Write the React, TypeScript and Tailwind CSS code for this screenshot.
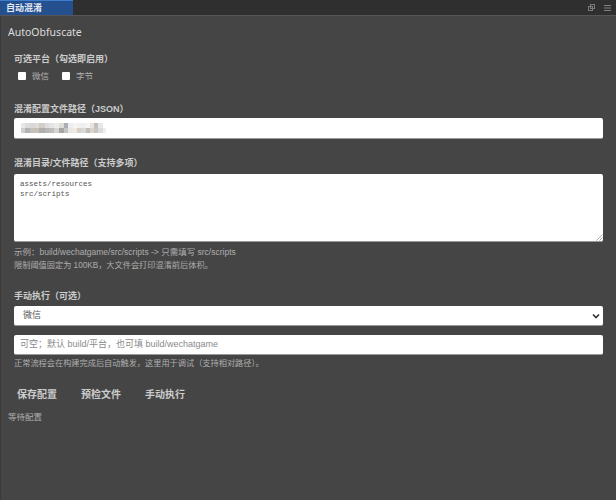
const font = "font-['Liberation_Sans','Noto_Sans_CJK_SC',sans-serif]";

function Label({ children, className = "" }: { children: React.ReactNode; className?: string }) {
  return <div className={`h-[14px] text-[9px] leading-[14px] font-bold text-[#cccccc] ${className}`}>{children}</div>;
}

const top = [
  [4, "#e8e8e8"], [5, "#dcdcdc"], [5, "#d8d8d8"], [4, "#e2dcd6"], [6, "#d2cdc8"], [4, "#dddddd"], [5, "#e4e4e4"], [5, "#ececec"], [5, "#e0dcd8"], [4, "#a8adb8"], [5, "#ededed"], [4, "#f4f4f4"], [4, "#f2f0ee"], [5, "#f0f0f0"], [4, "#f5f5f5"], [4, "#e8e4e0"], [4, "#c4bfba"], [5, "#e8e8e8"], [3, "#ffffff"],
] as const;
const bottom = [
  [4, "#d0d0d0"], [5, "#b0b4b8"], [5, "#c4c0bc"], [4, "#c8c0b4"], [6, "#b0aeac"], [4, "#b8b8b8"], [5, "#c0bebc"], [5, "#d4d4d4"], [5, "#a8a4a0"], [4, "#c4c4c4"], [5, "#e8e8e8"], [4, "#f0e8dc"], [4, "#d8d0c8"], [5, "#d8d8d8"], [4, "#c0bcb8"], [4, "#dcd4cc"], [4, "#c8c4c0"], [5, "#d8dce0"], [3, "#eeeeee"],
] as const;

export default function App() {
  return (
    <div className={`w-[616px] h-[500px] overflow-hidden bg-[#454545] flex flex-col ${font}`}>
      <div className="h-4 shrink-0 flex items-stretch justify-between bg-[#2f2f2f] border-b border-[#565656]">
        <div className="w-[73px] bg-[#25508f] border-t border-[#3f7ccb] text-[9px] leading-[15px] text-[#e4e9f2] pl-[6px] font-bold">自动混淆</div>
        <div className="flex items-center gap-[9px] pr-[5px]">
          <svg width="7" height="7" viewBox="0 0 7 7" fill="none" stroke="#7a7a7a" strokeWidth="1">
            <rect x="2.5" y="0.5" width="4" height="4" />
            <rect x="0.5" y="2.5" width="4" height="4" />
          </svg>
          <svg width="7" height="6" viewBox="0 0 7 6" fill="none" stroke="#808080" strokeWidth="1">
            <path d="M0 0.5H7M0 3H7M0 5.5H7" />
          </svg>
        </div>
      </div>
      <div className="flex-1 border-l border-[#3a3a3a] pl-[7px] pt-[9px]">
        <div className="h-[15px] text-[10.5px] leading-[15px] text-[#dcdcdc] font-['Noto_Sans',sans-serif]">AutoObfuscate</div>
        <div className="pl-[6px] pr-[13px] w-[608px] pt-[12px]">
          <Label>可选平台（勾选即启用）</Label>
          <div className="flex items-center h-[13px] mt-[4px] pl-[4px] text-[8.5px] text-[#aeaeae]">
            <span className="w-[8px] h-[8px] mb-[2px] bg-white rounded-[1px]" />
            <span className="ml-[6px]">微信</span>
            <span className="w-[8px] h-[8px] mb-[2px] ml-[13px] bg-white rounded-[1px]" />
            <span className="ml-[6px]">字节</span>
          </div>

          <Label className="mt-[19px]">混淆配置文件路径（JSON）</Label>
          <div className="mt-[2px] h-[21px] bg-white rounded-[2px] border-b border-[#999] pl-[7px] flex flex-col justify-center">
            <div className="flex flex-col blur-[0.6px]">
              <div className="flex h-[5px]">
                {top.map(([w, c], i) => (
                  <span key={i} style={{ width: w, background: c }} />
                ))}
              </div>
              <div className="flex h-[5px]">
                {bottom.map(([w, c], i) => (
                  <span key={i} style={{ width: w, background: c }} />
                ))}
              </div>
            </div>
          </div>

          <Label className="mt-[17px]">混淆目录/文件路径（支持多项）</Label>
          <div className="mt-[4px] h-[68px] bg-white rounded-[2px] border-b border-[#999] relative pl-[6px] pt-[5px] font-['Liberation_Mono',monospace] text-[7.5px] leading-[10px] text-[#555]">
            <div>assets/resources</div>
            <div>src/scripts</div>
            <svg className="absolute right-0 bottom-0" width="7" height="7" viewBox="0 0 7 7" stroke="#aaa" strokeWidth="1">
              <path d="M0.5 6.5L6.5 0.5M3.5 6.5L6.5 3.5" />
            </svg>
          </div>
          <div className="mt-[3px] leading-[14px] text-[#aeaeae]">
            <div className="text-[8.5px]">示例：build/wechatgame/src/scripts -&gt; 只需填写 src/scripts</div>
            <div className="text-[8.2px]">限制阈值固定为 100KB，大文件会打印混淆前后体积。</div>
          </div>

          <Label className="mt-[16px]">手动执行（可选）</Label>
          <div className="mt-[3px] h-[20px] bg-white rounded-[2px] border-b border-[#999] flex items-center justify-between pl-[9px] pr-[3px] text-[9px] text-[#555]">
            <span>微信</span>
            <svg width="8" height="6" viewBox="0 0 8 6" fill="none" stroke="#333" strokeWidth="1.6">
              <path d="M1 1.5L4 4.5L7 1.5" />
            </svg>
          </div>
          <div className="mt-[9px] h-[20px] bg-white rounded-[2px] border-b border-[#999] flex items-center pl-[6px] text-[9px] text-[#8a8a8a]">
            可空；默认 build/平台，也可填 build/wechatgame
          </div>
          <div className="mt-[2px] h-[14px] text-[8.2px] leading-[14px] text-[#aeaeae]">
            正常流程会在构建完成后自动触发，这里用于调试（支持相对路径）。
          </div>

          <div className="flex mt-[16px] pl-[3px] gap-[24px] text-[10px] leading-[16px] font-bold text-[#cccccc]">
            <span>保存配置</span>
            <span>预检文件</span>
            <span>手动执行</span>
          </div>
        </div>
        <div className="mt-[7px] text-[8.5px] leading-[14px] text-[#aeaeae]">等待配置</div>
      </div>
    </div>
  );
}
